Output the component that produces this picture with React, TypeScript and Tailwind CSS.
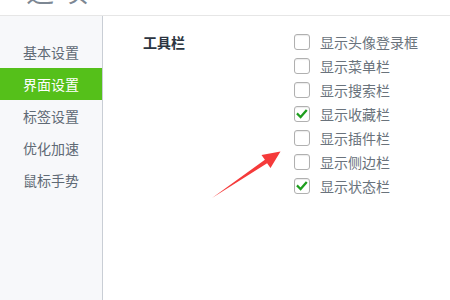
import React from "react";

const FONT = '"Noto Sans CJK SC", "Noto Sans", sans-serif';

const menu = ["基本设置", "界面设置", "标签设置", "优化加速", "鼠标手势"];
const opts: [string, boolean][] = [
  ["显示头像登录框", false],
  ["显示菜单栏", false],
  ["显示搜索栏", false],
  ["显示收藏栏", true],
  ["显示插件栏", false],
  ["显示侧边栏", false],
  ["显示状态栏", true],
];

function Box({ checked }: { checked: boolean }) {
  return (
    <div className="w-[16px] h-[16px] rounded-[3px] border border-[#b0b0b0] bg-white shadow-[inset_0_1px_1px_rgba(0,0,0,0.08)] flex items-center justify-center">
      {checked && (
        <svg width="12" height="10" viewBox="0 0 12 10">
          <path d="M1.8 5.2 L4.6 8 L10 1.8" fill="none" stroke="#1e9e1e" strokeWidth="2.3" strokeLinecap="square" />
        </svg>
      )}
    </div>
  );
}

export default function App() {
  return (
    <div className="relative w-[450px] h-[300px] bg-white flex flex-col overflow-hidden" style={{ fontFamily: FONT }}>
      <div className="h-[16px] shrink-0 border-b border-[#e6e6e6] overflow-hidden pl-[26px]">
        <div className="text-[28px] leading-[28px] mt-[-24px] tracking-[6px] text-[#7d8793]">选项</div>
      </div>
      <div className="flex flex-1">
        <div className="w-[103px] shrink-0 bg-[#f7f8fa] border-r border-[#c9ced5] pt-[20px]">
          {menu.map((m, i) => (
            <div
              key={m}
              className={
                i === 1
                  ? "h-[32px] pl-[23px] flex items-center text-[14px] bg-[#55c01a] text-white"
                  : "h-[32px] pl-[23px] flex items-center text-[14px] text-[#5f6a75]"
              }
            >
              {m}
            </div>
          ))}
        </div>
        <div className="flex-1 pl-[40px] pt-[14px] flex">
          <div className="w-[151px] h-[24px] flex items-center text-[14px] font-bold text-[#2b3440]">工具栏</div>
          <div className="flex flex-col">
            {opts.map(([t, c]) => (
              <div key={t} className="h-[24px] flex items-center gap-[10px]">
                <Box checked={c} />
                <span className="text-[14px] text-[#6a737c]">{t}</span>
              </div>
            ))}
          </div>
        </div>
      </div>
      <svg className="absolute left-0 top-0 pointer-events-none" width="450" height="300" viewBox="0 0 450 300">
        <polygon
          points="212,198 264.9,159.8 261.5,155 280.5,151.5 270.5,168 267.1,163.2"
          fill="#f53a3a"
        />
      </svg>
    </div>
  );
}
